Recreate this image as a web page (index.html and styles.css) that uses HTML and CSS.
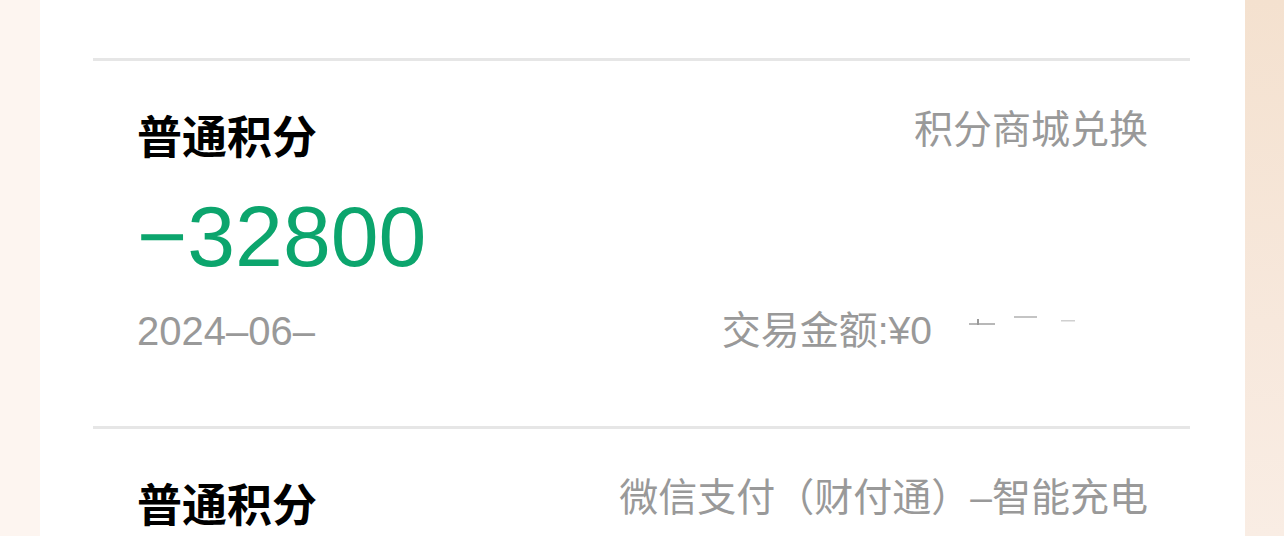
FILE: index.html
```html
<!DOCTYPE html>
<html lang="zh">
<head>
<meta charset="utf-8">
<title>积分明细</title>
<link rel="stylesheet" href="styles.css">
</head>
<body>
<div class="page">
  <div class="side side-left"></div>
  <main class="card">
    <div class="divider"></div>
    <section class="record">
      <div class="head">
        <h2 class="title">普通积分</h2>
        <span class="source">积分商城兑换</span>
      </div>
      <div class="amount">−32800</div>
      <div class="foot">
        <span class="date">2024–06–</span>
        <span class="trade">交易金额:¥0<svg class="mask" width="216" height="40" viewBox="0 0 216 40"><rect x="37" y="12" width="26" height="2" fill="#b8b8b8"/><rect x="45" y="8" width="2" height="6" fill="#9a9a9a"/><rect x="82" y="5" width="23" height="2" fill="#c4c4c4"/><rect x="129" y="9" width="14" height="1.5" fill="#d0d0d0"/></svg></span>
      </div>
    </section>
    <div class="divider divider-second"></div>
    <section class="record">
      <div class="head">
        <h2 class="title">普通积分</h2>
        <span class="source">微信支付（财付通）–智能充电</span>
      </div>
    </section>
  </main>
  <div class="side side-right"></div>
</div>
</body>
</html>
```

FILE: styles.css
```css
* {
  box-sizing: border-box;
}

html, body {
  margin: 0;
  padding: 0;
  background: #ffffff;
}

body {
  font-family: "Liberation Sans", "Noto Sans CJK SC", sans-serif;
  width: 1284px;
  height: 536px;
  overflow: hidden;
}

.page {
  display: flex;
  height: 536px;
}

.side {
  flex: none;
  height: 100%;
}

.side-left {
  width: 40px;
  background: #fdf5f0;
}

.side-right {
  width: 39px;
  background: linear-gradient(180deg, #f4e1cf 0%, #f7e8dc 60%, #f9ede4 100%);
}

.card {
  flex: 1;
  background: #ffffff;
  padding: 0 55px 0 53px;
}

.divider {
  height: 3px;
  background: #e6e6e6;
  margin-top: 58px;
}

.divider-second {
  margin-top: 75px;
}

.record {
  padding: 0 42px 0 44px;
}

.head {
  display: flex;
  justify-content: space-between;
  align-items: flex-start;
  margin-top: 49px;
}

.title {
  margin: 2px 0 0 0;
  font-family: "Noto Sans CJK SC", sans-serif;
  font-size: 45px;
  line-height: 45px;
  font-weight: 700;
  color: #000000;
}

.source {
  font-size: 39px;
  line-height: 40px;
  color: #999999;
}

.amount {
  margin-top: 36px;
  font-size: 86px;
  line-height: 86px;
  color: #0ca56d;
  letter-spacing: 0;
}

.foot {
  display: flex;
  justify-content: space-between;
  align-items: flex-start;
  margin-top: 32px;
  font-size: 40px;
  line-height: 40px;
  color: #999999;
}

.trade {
  display: flex;
  align-items: flex-start;
  font-size: 39px;
}

.mask {
  display: block;
  flex: none;
}
```
